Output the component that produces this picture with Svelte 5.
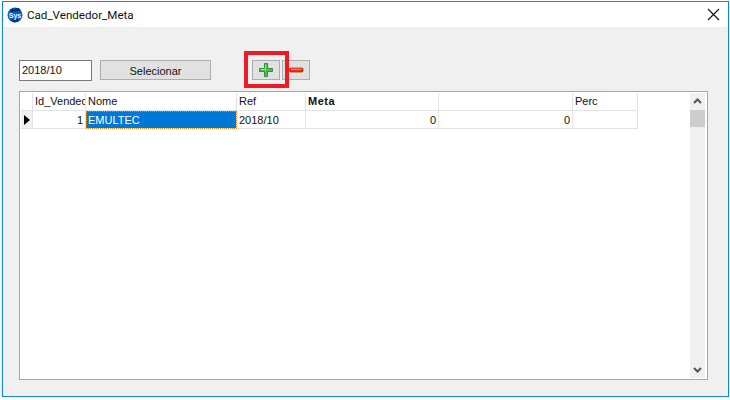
<script>
  const columns = [
    { label: "Id_Vendedor", width: 53 },
    { label: "Nome", width: 151 },
    { label: "Ref", width: 69 },
    { label: "Meta", width: 133, bold: true },
    { label: "", width: 134 },
    { label: "Perc", width: 65 }
  ];
  const row = [
    { text: "1", right: true },
    { text: "EMULTEC", selected: true },
    { text: "2018/10" },
    { text: "0", right: true },
    { text: "0", right: true },
    { text: "" }
  ];
</script>

<div class="window">
  <header class="titlebar">
    <svg class="logo" width="16" height="16" viewBox="0 0 16 16">
      <circle cx="8" cy="8" r="7.5" fill="#0b5fc4" />
      <path d="M3 2.5 L12 1 L14 4 L4 5 Z" fill="#062f70" />
      <path d="M4 12.5 L10 11.5 L12 14 L7 15.5 Z" fill="#062f70" />
      <text x="8" y="10.5" text-anchor="middle" class="logo-text">Sys</text>
    </svg>
    <span class="title">Cad_Vendedor_Meta</span>
    <svg width="13" height="13" viewBox="0 0 13 13">
      <path d="M1 1 L12 12 M12 1 L1 12" stroke="#111" stroke-width="1.1" fill="none" />
    </svg>
  </header>

  <main class="body">
    <div class="toolbar">
      <div class="date">2018/10</div>
      <button class="select">Selecionar</button>
      <div class="tools">
        <button class="tool">
          <svg width="16" height="16" viewBox="0 0 16 16">
            <path d="M6.5 1.5 H9.5 V6.5 H14.5 V9.5 H9.5 V14.5 H6.5 V9.5 H1.5 V6.5 H6.5 Z" fill="#58bb58" stroke="#2f8f35" />
            <path d="M7.5 3 V7.5 H3" stroke="#a5e3a0" fill="none" />
          </svg>
        </button>
        <button class="tool">
          <svg width="16" height="6" viewBox="0 0 16 6">
            <rect x="1.5" y="1" width="13.5" height="4" rx="1" fill="#e8330e" stroke="#b02a08" stroke-width="0.8" />
            <path d="M3 2.2 H13.5" stroke="#ffa070" />
          </svg>
        </button>
        <div class="highlight"></div>
      </div>
    </div>

    <div class="grid">
      <div class="table">
        <div class="tr head">
          <div class="indicator"></div>
          {#each columns as col}
            <div class="cell" class:bold={col.bold} style="width: {col.width}px">{col.label}</div>
          {/each}
        </div>
        <div class="tr">
          <div class="indicator"><span class="arrow"></span></div>
          {#each row as cell, i}
            <div class="cell" class:right={cell.right} class:selected={cell.selected} style="width: {columns[i].width}px">{cell.text}</div>
          {/each}
        </div>
      </div>
      <div class="scrollbar">
        <svg width="9" height="6" viewBox="0 0 9 6"><path d="M1 5 L4.5 1.5 L8 5" stroke="#555" stroke-width="2" fill="none" /></svg>
        <div class="thumb"></div>
        <div class="spacer"></div>
        <svg width="9" height="6" viewBox="0 0 9 6"><path d="M1 1 L4.5 4.5 L8 1" stroke="#555" stroke-width="2" fill="none" /></svg>
      </div>
    </div>
  </main>
</div>

<style>
  :global(body) {
    background: #fff;
  }

  .window {
    box-sizing: border-box;
    width: 727px;
    height: 396px;
    margin: 1px 0 0 2px;
    border: 1px solid #0f86e0;
    background: #f0f0f0;
    box-shadow: 0 2px 3px rgba(0, 0, 0, 0.2);
    display: flex;
    flex-direction: column;
    font-family: "Liberation Sans", Arial, sans-serif;
    font-size: 11px;
    color: #111;
  }

  .titlebar {
    height: 25px;
    flex: none;
    background: #fff;
    display: flex;
    align-items: center;
    padding: 0 8px 0 4px;
  }

  .logo {
    margin-right: 4px;
  }

  .logo-text {
    font-family: "Liberation Sans", sans-serif;
    font-size: 7px;
    font-weight: bold;
    fill: #eaf4ff;
  }

  .title {
    font-family: "Roboto", sans-serif;
    font-size: 11.6px;
    flex: 1;
  }

  .body {
    flex: 1;
    display: flex;
    flex-direction: column;
    padding: 24px 20px 16px 16px;
  }

  .toolbar {
    display: flex;
    align-items: center;
    height: 38px;
    margin-bottom: 2px;
  }

  .date {
    box-sizing: border-box;
    width: 73px;
    height: 21px;
    background: #fff;
    border: 1px solid #7a7a7a;
    padding: 3px 2px;
    margin-right: 8px;
  }

  button {
    box-sizing: border-box;
    height: 20px;
    padding: 0;
    background: #e1e1e1;
    border: 1px solid #adadad;
    font: inherit;
    color: inherit;
  }

  .select {
    width: 111px;
    padding-top: 2px;
    margin-right: 41px;
  }

  .tools {
    position: relative;
    display: flex;
    gap: 2px;
  }

  .tool {
    width: 28px;
    display: flex;
    align-items: center;
    justify-content: center;
  }

  .highlight {
    position: absolute;
    left: -8px;
    top: -9px;
    width: 45px;
    height: 37px;
    box-sizing: border-box;
    border: 4px solid #ed1c24;
  }

  .grid {
    flex: 1;
    display: flex;
    justify-content: space-between;
    background: #fff;
    border: 1px solid #a6a6a6;
    padding: 1px 1px 0 1px;
  }

  .tr {
    display: flex;
    height: 18px;
  }

  .indicator {
    box-sizing: border-box;
    width: 12px;
    flex: none;
    background: #f0f0f0;
    border-right: 1px solid #e3e3e3;
    border-bottom: 1px solid #e3e3e3;
    display: flex;
    align-items: center;
    justify-content: center;
  }

  .head .indicator {
    background: #fff;
  }

  .arrow {
    width: 0;
    height: 0;
    border-left: 6px solid #000;
    border-top: 5px solid transparent;
    border-bottom: 5px solid transparent;
  }

  .cell {
    box-sizing: border-box;
    flex: none;
    overflow: hidden;
    white-space: nowrap;
    padding: 3px 2px 0;
    border-right: 1px solid #e3e3e3;
    border-bottom: 1px solid #e3e3e3;
  }

  .head .cell {
    padding-top: 2px;
  }

  .bold {
    font-weight: bold;
    letter-spacing: 0.5px;
  }

  .right {
    text-align: right;
  }

  .selected {
    background: #0078d7;
    color: #fff;
    outline: 1px dotted #e08a20;
    outline-offset: -1px;
  }

  .scrollbar {
    width: 15px;
    flex: none;
    background: #f0f0f0;
    margin: 0 1px 1px 0;
    display: flex;
    flex-direction: column;
    align-items: center;
    padding: 5px 0;
  }

  .thumb {
    width: 15px;
    height: 17px;
    margin-top: 6px;
    background: #cdcdcd;
  }

  .spacer {
    flex: 1;
  }
</style>
